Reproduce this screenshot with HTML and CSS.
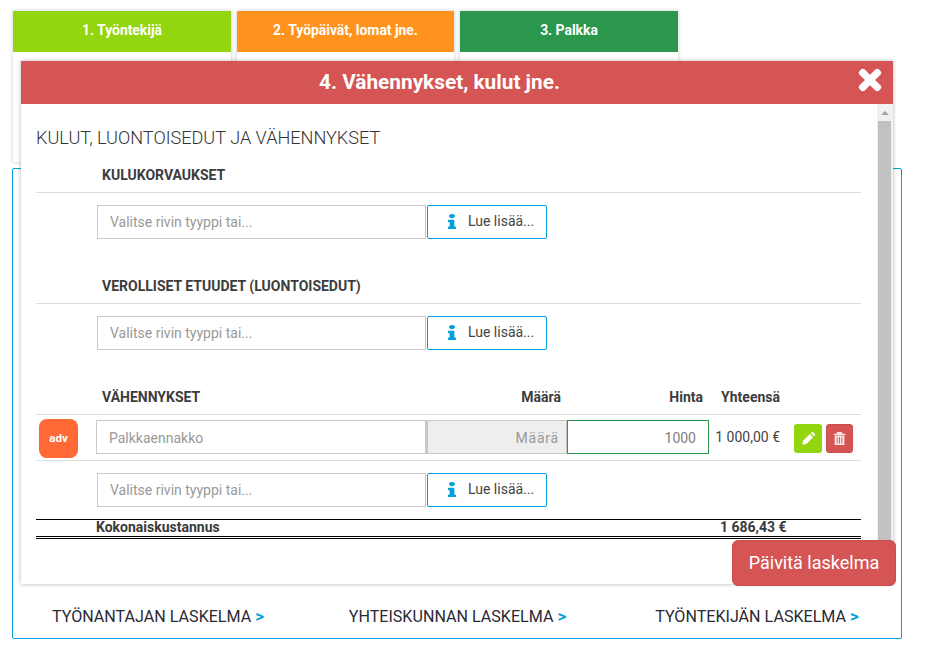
FILE: index.html
```html
<!DOCTYPE html>
<html lang="fi">
<head>
<meta charset="utf-8">
<title>Palkkalaskelma</title>
<link rel="stylesheet" href="styles.css">
</head>
<body>
<div class="page">
  <div class="tabs">
    <div class="tab"><div class="tab-head green">1. Työntekijä</div></div>
    <div class="tab"><div class="tab-head orange">2. Työpäivät, lomat jne.</div></div>
    <div class="tab"><div class="tab-head dark">3. Palkka</div></div>
  </div>
  <div class="main">
    <a class="calc">TYÖNANTAJAN LASKELMA <b>&gt;</b></a>
    <a class="calc">YHTEISKUNNAN LASKELMA <b>&gt;</b></a>
    <a class="calc">TYÖNTEKIJÄN LASKELMA <b>&gt;</b></a>
  </div>
</div>

<div class="modal">
  <div class="modal-head">
    <span>4. Vähennykset, kulut jne.</span>
    <svg class="close" viewBox="0 0 352 512"><path d="M242.72 256l100.07-100.07c12.28-12.28 12.28-32.19 0-44.48l-22.24-22.24c-12.28-12.28-32.19-12.28-44.48 0L176 189.28 75.93 89.21c-12.28-12.28-32.19-12.28-44.48 0L9.21 111.45c-12.28 12.28-12.28 32.19 0 44.48L109.28 256 9.21 356.07c-12.28 12.28-12.28 32.19 0 44.48l22.24 22.24c12.28 12.28 32.2 12.28 44.48 0L176 322.72l100.07 100.07c12.28 12.28 32.2 12.28 44.48 0l22.24-22.24c12.28-12.28 12.28-32.19 0-44.48L242.72 256z"/></svg>
  </div>
  <div class="modal-body">
    <div class="content">
      <h2 class="title">KULUT, LUONTOISEDUT JA VÄHENNYKSET</h2>

      <div class="sec-head"><span class="sec-name">KULUKORVAUKSET</span></div>
      <div class="add-row">
        <div class="select">Valitse rivin tyyppi tai...</div>
        <div class="more"><svg class="info" viewBox="0 0 192 512" preserveAspectRatio="none"><path d="M20 424.229h20V279.771H20c-11.046 0-20-8.954-20-20V212c0-11.046 8.954-20 20-20h112c11.046 0 20 8.954 20 20v212.229h20c11.046 0 20 8.954 20 20V492c0 11.046-8.954 20-20 20H20c-11.046 0-20-8.954-20-20v-47.771c0-11.046 8.954-20 20-20zM96 0C56.235 0 24 32.235 24 72s32.235 72 72 72 72-32.235 72-72S135.764 0 96 0z"/></svg><span>Lue lisää...</span></div>
      </div>

      <div class="sec-head"><span class="sec-name">VEROLLISET ETUUDET (LUONTOISEDUT)</span></div>
      <div class="add-row">
        <div class="select">Valitse rivin tyyppi tai...</div>
        <div class="more"><svg class="info" viewBox="0 0 192 512" preserveAspectRatio="none"><path d="M20 424.229h20V279.771H20c-11.046 0-20-8.954-20-20V212c0-11.046 8.954-20 20-20h112c11.046 0 20 8.954 20 20v212.229h20c11.046 0 20 8.954 20 20V492c0 11.046-8.954 20-20 20H20c-11.046 0-20-8.954-20-20v-47.771c0-11.046 8.954-20 20-20zM96 0C56.235 0 24 32.235 24 72s32.235 72 72 72 72-32.235 72-72S135.764 0 96 0z"/></svg><span>Lue lisää...</span></div>
      </div>

      <div class="sec-head">
        <span class="sec-name">VÄHENNYKSET</span>
        <span class="col-qty">Määrä</span>
        <span class="col-price">Hinta</span>
        <span class="col-total">Yhteensä</span>
      </div>
      <div class="item-row">
        <div class="badge">adv</div>
        <div class="cell name">Palkkaennakko</div>
        <div class="cell qty">Määrä</div>
        <div class="cell price">1000</div>
        <div class="sum">1 000,00 €</div>
        <div class="act edit"><svg viewBox="0 0 12 12"><path d="M0.300 11.700 1 8 7.200 1.800 10.200 4.800 4 11ZM8 1 8.800.2a1 1 0 0 1 1.400 0L11.800 1.800a1 1 0 0 1 0 1.400L11 4Z"/></svg></div>
        <div class="act del"><svg viewBox="0.500 0.400 11 11.200"><path fill-rule="evenodd" d="M4 .5h4l.6 1.300H11v1.100H1V1.800h2.400ZM1.800 3.500h8.400V11.500H1.800ZM3.600 5V10.200H4.400V5ZM5.600 5V10.200H6.400V5ZM7.600 5V10.200H8.400V5Z"/></svg></div>
      </div>
      <div class="add-row">
        <div class="select">Valitse rivin tyyppi tai...</div>
        <div class="more"><svg class="info" viewBox="0 0 192 512" preserveAspectRatio="none"><path d="M20 424.229h20V279.771H20c-11.046 0-20-8.954-20-20V212c0-11.046 8.954-20 20-20h112c11.046 0 20 8.954 20 20v212.229h20c11.046 0 20 8.954 20 20V492c0 11.046-8.954 20-20 20H20c-11.046 0-20-8.954-20-20v-47.771c0-11.046 8.954-20 20-20zM96 0C56.235 0 24 32.235 24 72s32.235 72 72 72 72-32.235 72-72S135.764 0 96 0z"/></svg><span>Lue lisää...</span></div>
      </div>
      <div class="total">
        <span class="total-name">Kokonaiskustannus</span>
        <span class="total-sum">1 686,43 €</span>
      </div>
    </div>
    <div class="scrollbar">
      <div class="arrow"></div>
      <div class="thumb"></div>
    </div>
  </div>
</div>
<div class="update">Päivitä laskelma</div>
</body>
</html>
```

FILE: styles.css
```css
* { box-sizing: border-box; }
html, body { margin: 0; padding: 0; }
body {
  background: #fff;
  font-family: Roboto, "Liberation Sans", sans-serif;
  color: #3c3c3c;
  width: 926px;
  height: 651px;
  overflow: hidden;
  position: relative;
}
.page { padding: 11px 0 0 12px; width: 926px; }
.tabs { display: flex; gap: 6px; padding-left: 1px; }
.tab {
  width: 218px;
  height: 151px;
  background: #fff;
  box-shadow: 0 0 4px rgba(0,0,0,.22);
}
.tab:nth-child(2) { width: 217px; }
.tab-head {
  height: 41px;
  line-height: 39px;
  text-align: center;
  color: #fff;
  font-size: 13.9px;
  font-weight: 700;
}
.green { background: #93d50f; }
.orange { background: #ff931e; }
.dark { background: #2b974c; }
.main {
  margin-top: 6px;
  width: 890px;
  height: 471px;
  border: 1px solid #00a0dc;
  border-radius: 2px;
  padding: 0 0 11px 5px;
  display: grid;
  grid-template-columns: repeat(3, 280px);
  column-gap: 19.5px;
  align-content: end;
  justify-items: center;
}
.calc {
  font-size: 16.1px;
  color: #2a2a35;
  line-height: 20px;
}
.calc b { color: #00a0dc; font-weight: 700; font-size: 17px; }

.modal {
  position: absolute;
  left: 21px;
  top: 61px;
  width: 872px;
  height: 523px;
  background: #fff;
  box-shadow: 0 0 4px rgba(0,0,0,.3);
}
.modal-head {
  position: relative;
  height: 43px;
  background: #d45553;
  color: #fff;
  font-size: 20.8px;
  font-weight: 700;
  line-height: 42px;
  text-align: center;
  padding-right: 35px;
}
.close {
  position: absolute;
  right: 11px;
  top: 4px;
  width: 24px;
  height: 30px;
  fill: #fff;
  stroke: #fff;
  stroke-width: 30;
}
.modal-body {
  display: flex;
  justify-content: space-between;
  height: 480px;
}
.content { width: 825px; margin-left: 15px; }
.title {
  margin: 0;
  padding-top: 25px;
  height: 60px;
  font-size: 18.1px;
  line-height: 18px;
  font-weight: 300;
  color: #333;
}
.sec-head {
  height: 29px;
  border-bottom: 1px solid #ddd;
  display: flex;
  align-items: flex-start;
  font-size: 14px;
  line-height: 15px;
  font-weight: 700;
  color: #3c3c3c;
  padding: 4px 81px 0 66px;
}
.sec-name { flex: 1; }
.col-qty { width: 60px; text-align: right; }
.col-price { width: 142px; text-align: right; }
.col-total { width: 77px; text-align: right; }

.add-row {
  display: flex;
  gap: 1px;
  padding: 12px 0 36px 61px;
  height: 82px;
}
.select {
  width: 329px;
  height: 34px;
  border: 1px solid #c8c8c8;
  padding-left: 12px;
  font-size: 14px;
  line-height: 32px;
  color: #999;
}
.more {
  width: 120px;
  height: 34px;
  border: 1px solid #00a0dc;
  border-radius: 2px;
  display: flex;
  align-items: center;
  font-size: 14px;
  padding-left: 20px;
  color: #444;
}
.more span { margin-left: 12px; line-height: 30px; padding-bottom: 2px; }
.info { width: 8px; height: 15px; margin-bottom: 2px; fill: #00a0dc; }

.item-row {
  display: flex;
  align-items: flex-start;
  height: 46px;
  border-bottom: 1px solid #ddd;
}
.badge {
  width: 39px;
  height: 39px;
  margin: 4px 0 0 3px;
  border-radius: 8px;
  background: #ff6936;
  color: #fff;
  font-size: 11.5px;
  font-weight: 700;
  text-align: center;
  line-height: 39px;
}
.cell {
  height: 34px;
  margin-top: 5px;
  border: 1px solid #c8c8c8;
  font-size: 14px;
  line-height: 34px;
  color: #999;
  padding: 0 12px;
}
.name { width: 330px; margin-left: 18px; }
.qty { width: 141px; background: #eee; text-align: right; border-left-width: 2px; padding-right: 7px; letter-spacing: .8px; }
.price { width: 142px; text-align: right; border-color: #2b974c; color: #808080; }
.sum { width: 71px; margin-top: 7px; text-align: right; font-size: 14px; line-height: 30px; color: #444; }
.act {
  width: 28px;
  height: 29px;
  margin-top: 9px;
  border-radius: 3px;
  display: flex;
  align-items: center;
  justify-content: center;
}
.act svg { fill: #fff; width: 13px; height: 13px; }
.edit { background: #93d50f; margin-left: 14px; }
.del { background: #d45553; width: 27px; margin-left: 4px; border: 1px solid #cc4d4b; }
.del svg { fill: #fde4e4; }
.item-row + .add-row { height: 58px; padding-bottom: 0; }
.total {
  height: 20px;
  border-top: 1px solid #000;
  border-bottom: 3px double #000;
  display: flex;
  font-size: 14px;
  font-weight: 700;
  line-height: 15px;
  color: #3a3a3a;
}
.total-name { margin-left: 60px; width: 624px; }
.total-sum { white-space: nowrap; font-size: 14px; }

.scrollbar {
  width: 16px;
  background: #f1f1f1;
  padding: 7px 2px 0 1px;
}
.arrow {
  width: 0;
  height: 0;
  margin: 0 auto;
  border: 4px solid transparent;
  border-top: 0;
  border-bottom: 4px solid #a3a3a3;
}
.thumb { margin-top: 6px; height: 440px; background: #c1c1c1; }

.update {
  position: absolute;
  left: 732px;
  top: 540px;
  width: 164px;
  height: 46px;
  border-radius: 6px;
  background: #d45553;
  border: 1px solid #cc4d4b;
  color: #fff;
  font-size: 18px;
  line-height: 43px;
  text-align: center;
}
```
